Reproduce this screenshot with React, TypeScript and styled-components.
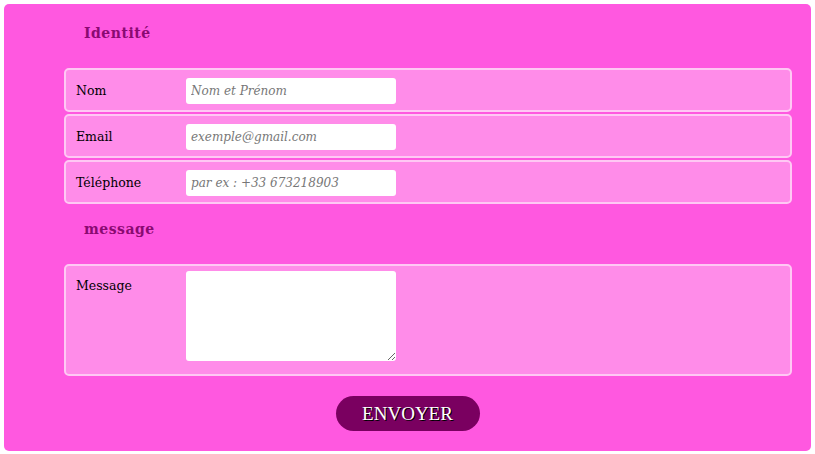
import React from "react";
import styled, { createGlobalStyle } from "styled-components";

const GlobalStyle = createGlobalStyle`
  body {
    margin: 4px;
    background: #ffffff;
    font-family: "DejaVu Serif", "Liberation Serif", serif;
  }
`;

const Card = styled.form`
  background-color: #ff58e0;
  border-radius: 5px;
  padding: 4px 19px 20px 60px;
  display: flex;
  flex-direction: column;
`;

const Legend = styled.div`
  box-sizing: border-box;
  height: 60px;
  padding: 17px 0 0 20px;
  font-size: 14px;
  line-height: 16px;
  font-weight: bold;
  letter-spacing: 0.5px;
  color: #8a0a72;
`;

const Rows = styled.div`
  display: flex;
  flex-direction: column;
  gap: 2px;
`;

const Row = styled.div<{ $tall?: boolean }>`
  display: flex;
  align-items: flex-start;
  background-color: #ff8ce9;
  border: 2px solid #ffc8f4;
  border-radius: 5px;
  padding: ${(p) => (p.$tall ? "5px 10px 13px" : "8px 10px 6px")};
`;

const Label = styled.label<{ $offset?: number }>`
  width: 110px;
  flex-shrink: 0;
  padding-top: ${(p) => p.$offset ?? 4}px;
  font-size: 12.5px;
  line-height: 18px;
  color: #000;
`;

const Input = styled.input`
  box-sizing: border-box;
  width: 210px;
  height: 26px;
  border: none;
  border-radius: 3px;
  padding: 0 5px;
  background: #fff;
  font-family: "DejaVu Serif", serif;
  font-style: italic;
  font-size: 12px;
  outline: none;

  &::placeholder {
    color: #777;
  }
`;

const TextArea = styled.textarea`
  box-sizing: border-box;
  width: 210px;
  height: 90px;
  border: none;
  border-radius: 3px;
  background: #fff;
  margin: 0;
  font-family: "DejaVu Serif", serif;
  font-size: 12px;
  outline: none;
`;

const Footer = styled.div`
  display: flex;
  justify-content: center;
  padding-top: 20px;
  margin-left: -41px;
`;

const SendButton = styled.button`
  width: 144px;
  height: 35px;
  border: none;
  border-radius: 18px;
  background-color: #7a0060;
  color: #fff;
  font-family: "Liberation Serif", serif;
  font-size: 19px;
  text-transform: uppercase;
  text-shadow: 1px 1px 0 #000;
  cursor: pointer;
`;

const App: React.FC = () => {
  return (
    <>
      <GlobalStyle />
      <Card onSubmit={(e) => e.preventDefault()}>
        <Legend>Identité</Legend>
        <Rows>
          <Row>
            <Label htmlFor="nom">Nom</Label>
            <Input id="nom" placeholder="Nom et Prénom" />
          </Row>
          <Row>
            <Label htmlFor="email">Email</Label>
            <Input id="email" placeholder="exemple@gmail.com" />
          </Row>
          <Row>
            <Label htmlFor="tel">Téléphone</Label>
            <Input id="tel" placeholder="par ex : +33 673218903" />
          </Row>
        </Rows>
        <Legend>message</Legend>
        <Rows>
          <Row $tall>
            <Label htmlFor="msg" $offset={6}>Message</Label>
            <TextArea id="msg" />
          </Row>
        </Rows>
        <Footer>
          <SendButton type="submit">Envoyer</SendButton>
        </Footer>
      </Card>
    </>
  );
};

export default App;
